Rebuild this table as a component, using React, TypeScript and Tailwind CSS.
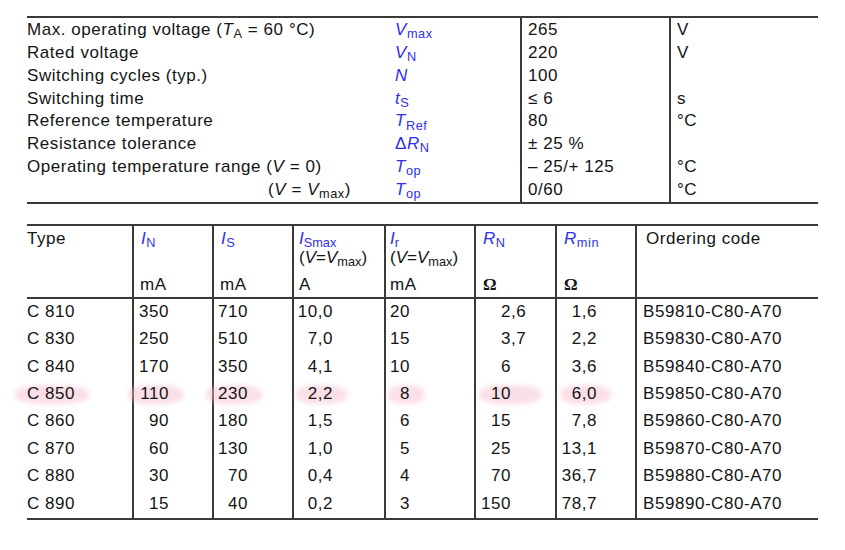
const blue = "text-[#2f2ff0]";

function Sym({ base, sub, pre }: { base: string; sub?: string; pre?: string }) {
  return (
    <span className={blue}>
      {pre}
      <i>{base}</i>
      {sub && <sub>{sub}</sub>}
    </span>
  );
}

const specs: { label: React.ReactNode; sym: React.ReactNode; value: string; unit: string }[] = [
  {
    label: (
      <>
        Max. operating voltage (<i>T</i>
        <sub>A</sub> = 60 °C)
      </>
    ),
    sym: <Sym base="V" sub="max" />,
    value: "265",
    unit: "V",
  },
  { label: "Rated voltage", sym: <Sym base="V" sub="N" />, value: "220", unit: "V" },
  { label: "Switching cycles (typ.)", sym: <Sym base="N" />, value: "100", unit: "" },
  { label: "Switching time", sym: <Sym base="t" sub="S" />, value: "≤ 6", unit: "s" },
  { label: "Reference temperature", sym: <Sym base="T" sub="Ref" />, value: "80", unit: "°C" },
  { label: "Resistance tolerance", sym: <Sym pre="Δ" base="R" sub="N" />, value: "± 25 %", unit: "" },
  {
    label: (
      <>
        Operating temperature range (<i>V</i> = 0)
      </>
    ),
    sym: <Sym base="T" sub="op" />,
    value: "– 25/+ 125",
    unit: "°C",
  },
  {
    label: (
      <span className="pl-[241px]">
        (<i>V</i> = <i>V</i>
        <sub>max</sub>)
      </span>
    ),
    sym: <Sym base="T" sub="op" />,
    value: "0/60",
    unit: "°C",
  },
];

const types = [
  ["C 810", "350", "710", "10,0", "20", "2,6", "1,6", "B59810-C80-A70"],
  ["C 830", "250", "510", "7,0", "15", "3,7", "2,2", "B59830-C80-A70"],
  ["C 840", "170", "350", "4,1", "10", "6", "3,6", "B59840-C80-A70"],
  ["C 850", "110", "230", "2,2", "8", "10", "6,0", "B59850-C80-A70"],
  ["C 860", "90", "180", "1,5", "6", "15", "7,8", "B59860-C80-A70"],
  ["C 870", "60", "130", "1,0", "5", "25", "13,1", "B59870-C80-A70"],
  ["C 880", "30", "70", "0,4", "4", "70", "36,7", "B59880-C80-A70"],
  ["C 890", "15", "40", "0,2", "3", "150", "78,7", "B59890-C80-A70"],
];

// pink marker stroke behind the C 850 values
function Mark({ on, children }: { on: boolean; children: React.ReactNode }) {
  return (
    <span className="relative inline-block">
      {on && (
        <span className="absolute -left-[12px] -right-[14px] top-[3px] bottom-[1px] rounded-[40%] bg-[#f5b9c7]/45 blur-[2.5px]" />
      )}
      <span className="relative">{children}</span>
    </span>
  );
}

const vline = "border-l-2 border-[#3a3a3a]";

export default function App() {
  return (
    <div className="w-[845px] h-[550px] bg-white text-[#141414] font-['Liberation_Sans',Arial,sans-serif] text-[17px] tracking-[0.55px] pl-[27px] pt-[16px]">
      <table className="w-[791px] table-fixed border-collapse border-y-2 border-[#3a3a3a]">
        <colgroup>
          <col className="w-[366px]" />
          <col className="w-[128px]" />
          <col className="w-[149px]" />
          <col className="w-[148px]" />
        </colgroup>
        <tbody>
          {specs.map((s, i) => (
            <tr key={i} className="leading-[22.85px]">
              <td className={`p-0 whitespace-nowrap ${i === 0 ? "pt-[1px]" : ""}`}>{s.label}</td>
              <td className="p-0 pl-[2px]">{s.sym}</td>
              <td className={`p-0 pl-[6px] ${vline}`}>{s.value}</td>
              <td className={`p-0 pl-[6px] ${vline}`}>{s.unit}</td>
            </tr>
          ))}
        </tbody>
      </table>

      <table className="mt-[20px] w-[791px] table-fixed border-collapse border-y-2 border-[#3a3a3a]">
        <colgroup>
          <col className="w-[106px]" />
          <col className="w-[80px]" />
          <col className="w-[80px]" />
          <col className="w-[92px]" />
          <col className="w-[90px]" />
          <col className="w-[81px]" />
          <col className="w-[80px]" />
          <col className="w-[182px]" />
        </colgroup>
        <thead>
          <tr className="leading-[19px] align-top">
            <th className="p-0 pt-[3px] h-[47px] text-left font-normal">Type</th>
            <th className={`p-0 pt-[3px] pl-[7px] text-left font-normal ${vline}`}>
              <Sym base="I" sub="N" />
            </th>
            <th className={`p-0 pt-[3px] pl-[7px] text-left font-normal ${vline}`}>
              <Sym base="I" sub="S" />
            </th>
            <th className={`p-0 pt-[3px] pl-[5px] text-left font-normal whitespace-nowrap tracking-normal ${vline}`}>
              <Sym base="I" sub="Smax" />
              <br />(<i>V</i>=<i>V</i>
              <sub>max</sub>)
            </th>
            <th className={`p-0 pt-[3px] pl-[4px] text-left font-normal whitespace-nowrap tracking-normal ${vline}`}>
              <Sym base="I" sub="r" />
              <br />(<i>V</i>=<i>V</i>
              <sub>max</sub>)
            </th>
            <th className={`p-0 pt-[3px] pl-[7px] text-left font-normal ${vline}`}>
              <Sym base="R" sub="N" />
            </th>
            <th className={`p-0 pt-[3px] pl-[7px] text-left font-normal ${vline}`}>
              <Sym base="R" sub="min" />
            </th>
            <th className={`p-0 pt-[3px] pl-[9px] text-left font-normal ${vline}`}>Ordering code</th>
          </tr>
          <tr className="leading-[25px] border-b-2 border-[#3a3a3a]">
            <th className="p-0 font-normal" />
            <th className={`p-0 pl-[6px] text-left font-normal ${vline}`}>mA</th>
            <th className={`p-0 pl-[6px] text-left font-normal ${vline}`}>mA</th>
            <th className={`p-0 pl-[5px] text-left font-normal ${vline}`}>A</th>
            <th className={`p-0 pl-[4px] text-left font-normal ${vline}`}>mA</th>
            <th className={`p-0 pl-[7px] text-left font-bold font-['Liberation_Serif',serif] ${vline}`}>Ω</th>
            <th className={`p-0 pl-[7px] text-left font-bold font-['Liberation_Serif',serif] ${vline}`}>Ω</th>
            <th className={`p-0 ${vline}`} />
          </tr>
        </thead>
        <tbody>
          {types.map((r, i) => {
            const hl = i === 3;
            const [rInt, rFrac] = r[5].split(",");
            return (
              <tr key={r[0]} className="leading-[23.4px]">
                <td className="p-0 pt-[1px] pb-[3px] whitespace-nowrap">
                  <Mark on={hl}>{r[0]}</Mark>
                </td>
                <td className={`p-0 pt-[1px] pb-[3px] pr-[43px] text-right ${vline}`}>
                  <Mark on={hl}>{r[1]}</Mark>
                </td>
                <td className={`p-0 pt-[1px] pb-[3px] pr-[44px] text-right ${vline}`}>
                  <Mark on={hl}>{r[2]}</Mark>
                </td>
                <td className={`p-0 pt-[1px] pb-[3px] pr-[51px] text-right ${vline}`}>
                  <Mark on={hl}>{r[3]}</Mark>
                </td>
                <td className={`p-0 pt-[1px] pb-[3px] pr-[64px] text-right ${vline}`}>
                  <Mark on={hl}>{r[4]}</Mark>
                </td>
                <td className={`p-0 pt-[1px] pb-[3px] pr-[28px] text-right whitespace-nowrap ${vline}`}>
                  <Mark on={hl}>
                    {rInt}
                    <span className="inline-block w-[16px] text-left">{rFrac ? "," + rFrac : ""}</span>
                  </Mark>
                </td>
                <td className={`p-0 pt-[1px] pb-[3px] pr-[38px] text-right ${vline}`}>
                  <Mark on={hl}>{r[6]}</Mark>
                </td>
                <td className={`p-0 pt-[1px] pb-[3px] pl-[6px] whitespace-nowrap ${vline}`}>{r[7]}</td>
              </tr>
            );
          })}
        </tbody>
      </table>
    </div>
  );
}
